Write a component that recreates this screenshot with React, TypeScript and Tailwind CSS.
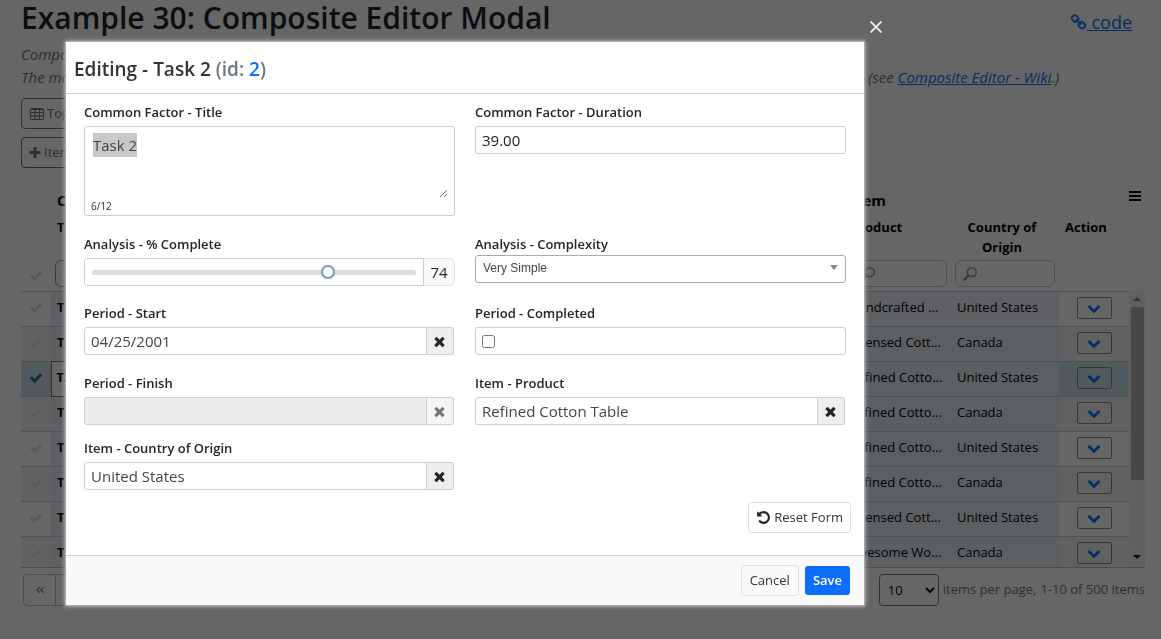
import { useEffect, useRef, useState } from 'react';
import type { ReactNode } from 'react';
import { FaAngleDoubleLeft } from 'react-icons/fa';

const ICONS = {
  check:
    'M1671 566q0 40-28 68l-724 724-136 136q-28 28-68 28t-68-28l-136-136-362-362q-28-28-28-68t28-68l136-136q28-28 68-28t68 28l294 295 656-657q28-28 68-28t68 28l136 136q28 28 28 68z',
  times:
    'M1490 1322q0 40-28 68l-136 136q-28 28-68 28t-68-28l-294-294-294 294q-28 28-68 28t-68-28l-136-136q-28-28-28-68t28-68l294-294-294-294q-28-28-28-68t28-68l136-136q28-28 68-28t68 28l294 294 294-294q28-28 68-28t68 28l136 136q28 28 28 68t-28 68l-294 294 294 294q28 28 28 68z',
  chevronDown:
    'M1683 808l-742 741q-19 19-45 19t-45-19l-742-741q-19-19-19-45.5t19-45.5l166-165q19-19 45-19t45 19l531 531 531-531q19-19 45-19t45 19l166 165q19 19 19 45.5t-19 45.5z',
  plus:
    'M1600 736v192q0 40-28 68t-68 28h-416v416q0 40-28 68t-68 28h-192q-40 0-68-28t-28-68v-416h-416q-40 0-68-28t-28-68v-192q0-40 28-68t68-28h416v-416q0-40 28-68t68-28h192q40 0 68 28t28 68v416h416q40 0 68 28t28 68z',
  undo:
    'M1664 896q0 156-61 298t-164 245-245 164-298 61q-172 0-327-72.5t-264-204.5q-7-10-6.5-22.5t8.5-20.5l137-138q10-9 25-9 16 2 23 12 73 95 179 147t225 52q104 0 198.5-40.5t163.5-109.5 109.5-163.5 40.5-198.5-40.5-198.5-109.5-163.5-163.5-109.5-198.5-40.5q-98 0-188 35.5t-160 101.5l137 138q31 30 14 69-17 40-59 40h-448q-26 0-45-19t-19-45v-448q0-42 40-59 39-17 69 14l130 129q107-101 244.5-156.5t284.5-55.5q156 0 298 61t245 164 164 245 61 298z',
  link:
    'M1520 1216q0-40-28-68l-208-208q-28-28-68-28-42 0-72 32 3 3 19 18.5t21.5 21.5 15 19 13 25.5 3.5 27.5q0 40-28 68t-68 28q-15 0-27.5-3.5t-25.5-13-19-15-21.5-21.5-18.5-19q-33 31-33 73 0 40 28 68l206 207q27 27 68 27 40 0 68-26l147-146q28-28 28-67zm-703-705q0-40-28-68l-206-207q-28-28-68-28-39 0-68 27l-147 146q-28 28-28 67 0 40 28 68l208 208q27 27 68 27 42 0 72-31-3-3-19-18.5t-21.5-21.5-15-19-13-25.5-3.5-27.5q0-40 28-68t68-28q15 0 27.5 3.5t25.5 13 19 15 21.5 21.5 18.5 19q33-31 33-73zm895 705q0 120-85 203l-147 146q-83 83-203 83-121 0-204-85l-206-207q-83-83-83-203 0-123 88-209l-88-88q-86 88-208 88-120 0-204-84l-208-208q-84-84-84-204t85-203l147-146q83-83 203-83 121 0 204 85l206 207q83 83 83 203 0 123-88 209l88 88q86-88 208-88 120 0 204 84l208 208q84 84 84 204z',
};

function Icon({ name, className }: { name: keyof typeof ICONS; className: string }) {
  return (
    <svg viewBox="0 0 1792 1792" fill="currentColor" aria-hidden="true" className={className}>
      <path d={ICONS[name]} />
    </svg>
  );
}

function TableIcon() {
  return (
    <svg viewBox="0 0 14 12" fill="none" stroke="currentColor" aria-hidden="true" className="h-3 w-3.5">
      <rect x="0.5" y="0.5" width="13" height="11" rx="1" />
      <path d="M0 1.5h14M0 4.5h14M0 8h14M5 1v11M9.5 1v11" />
    </svg>
  );
}

function SearchIcon() {
  return (
    <svg viewBox="0 0 14 14" fill="none" stroke="#999" aria-hidden="true" className="size-3.5 shrink-0">
      <circle cx="8.8" cy="5.2" r="4.4" strokeWidth="1.6" />
      <path d="M5.4 8.6L1.4 12.6" strokeWidth="2.6" strokeLinecap="round" />
    </svg>
  );
}

const rows = [
  { product: 'Handcrafted ...', country: 'United States' },
  { product: 'Licensed Cott...', country: 'Canada' },
  { product: 'Refined Cotto...', country: 'United States' },
  { product: 'Refined Cotto...', country: 'Canada' },
  { product: 'Refined Cotto...', country: 'United States' },
  { product: 'Refined Cotto...', country: 'Canada' },
  { product: 'Licensed Cott...', country: 'United States' },
  { product: 'Awesome Wo...', country: 'Canada' },
];

const SELECTED = 2;

function FilterBox({ label }: { label: string }) {
  return (
    <label className="mx-1 flex h-[27px] items-center rounded-md border border-[#c4c4c4] px-[7px]">
      <SearchIcon />
      <input aria-label={label} className="w-full min-w-0 bg-transparent outline-none" />
    </label>
  );
}

function TaskGrid() {
  return (
    <div className="mt-[17px] flex h-[383px] overflow-hidden border-b border-[#bbb] text-black">
      <div className="min-w-0 flex-1">
        <table className="w-full table-fixed border-collapse text-left text-[13px] leading-5">
          <colgroup>
            <col className="w-[30px]" />
            <col />
            <col className="w-[102px]" />
            <col className="w-[108px]" />
            <col className="w-[70px]" />
          </colgroup>
          <thead className="font-bold">
            <tr className="h-8 text-[15px]">
              <td />
              <th className="px-1.5 pb-0.5">Common Factor</th>
              <th className="px-0.5 pb-0.5">Item</th>
              <td />
              <td />
            </tr>
            <tr className="h-10 align-top">
              <td />
              <th className="px-1.5">Title</th>
              <th className="px-0.5">Product</th>
              <th className="pr-3 pl-1.5 text-center">Country of Origin</th>
              <th className="px-1.5">Action</th>
            </tr>
            <tr className="h-[34px]">
              <td>
                <Icon name="check" className="mx-auto mt-1 size-3.5 text-[#dce2e4]" />
              </td>
              <td>
                <input
                  aria-label="Filter by title"
                  className="mx-1 h-[27px] w-40 rounded-md border border-[#5aa5d0] px-2 outline-none"
                />
              </td>
              <td>
                <FilterBox label="Filter by product" />
              </td>
              <td>
                <FilterBox label="Filter by country" />
              </td>
              <td />
            </tr>
          </thead>
          <tbody>
            {rows.map((row, i) => {
              const selected = i === SELECTED;
              return (
                <tr
                  key={i}
                  className={
                    selected
                      ? 'h-[35px] border-t border-[#c8c8c8] bg-[#cfe0ea]'
                      : i % 2
                        ? 'h-[35px] border-t border-[#c8c8c8] bg-[#f3f3f3]'
                        : 'h-[35px] border-t border-[#c8c8c8]'
                  }
                >
                  <td className="pb-0.5">
                    <Icon
                      name="check"
                      className={selected ? 'mx-auto size-3.5 text-[#23739b]' : 'mx-auto size-3.5 text-[#dce2e4]'}
                    />
                  </td>
                  <td
                    className={
                      selected
                        ? 'border border-[#777] bg-white px-[5px] pb-1 font-bold'
                        : 'bg-[#e9eef5] px-1.5 pb-1 font-bold'
                    }
                  >
                    TASK {i}
                  </td>
                  <td
                    className={
                      i === 0
                        ? 'overflow-hidden bg-[#edf0f8] pb-1 whitespace-nowrap'
                        : 'overflow-hidden bg-[#e6eef3] pb-1 whitespace-nowrap'
                    }
                  >
                    {row.product}
                  </td>
                  <td className={i === 0 ? 'bg-[#edf0f8] px-1.5 pb-1' : 'bg-[#e6eef3] px-1.5 pb-1'}>{row.country}</td>
                  <td className="pb-0.5">
                    <button
                      type="button"
                      aria-label="Row actions"
                      className="mx-auto flex h-[22px] w-[35px] items-center justify-center rounded-xs border border-[#888] text-[#0d6efd]"
                    >
                      <Icon name="chevronDown" className="size-3.5" />
                    </button>
                  </td>
                </tr>
              );
            })}
          </tbody>
        </table>
      </div>
      <div className="flex w-4 flex-col">
        <button type="button" aria-label="Grid menu" className="flex h-[106px] flex-col gap-0.5 pt-1.5">
          <span className="h-0.5 w-3 bg-black" />
          <span className="h-0.5 w-3 bg-black" />
          <span className="h-0.5 w-3 bg-black" />
        </button>
        <div className="flex flex-1 flex-col items-center bg-[#f1f1f1]">
          <span className="mt-1.5 border-x-4 border-b-4 border-x-transparent border-b-[#777]" />
          <span className="mt-1.5 h-[173px] w-[13px] bg-[#b5b5b5]" />
          <span className="mt-auto mb-2 border-x-4 border-t-4 border-x-transparent border-t-[#222]" />
        </div>
      </div>
    </div>
  );
}

function Page() {
  return (
    <div className="pr-4 pl-[21px] text-[#212529]">
      <header className="flex h-9 items-start justify-between pr-[13px]">
        <h1 className="text-[30px] leading-9 font-semibold">Example 30: Composite Editor Modal</h1>
        <a href="#code" className="mt-2 flex items-center text-[18px] leading-7 text-[#0d6efd]">
          <Icon name="link" className="size-[17px]" />
          <span className="whitespace-pre underline"> code</span>
        </a>
      </header>
      <div className="mt-[7px] text-[15px] leading-[23px] whitespace-nowrap text-[#6c757d] italic">
        <p>Composite Editor Modal</p>
        <p className="flex">
          <span className="flex-1">The modal</span>
          <span className="w-[277px]">
            (see{' '}
            <a href="#wiki" className="text-[#0d6efd] underline">
              Composite Editor - Wiki
            </a>
            .)
          </span>
        </p>
      </div>
      <div className="mt-[9px] flex flex-col items-start gap-2 text-[13px] text-[#6c757d]">
        <button type="button" className="flex h-[31px] items-center gap-[3px] rounded-sm border border-[#6c757d] px-2">
          <TableIcon />
          Toggle
        </button>
        <button type="button" className="flex h-[31px] items-center gap-0.5 rounded-sm border border-[#6c757d] px-1.5">
          <Icon name="plus" className="size-3.5" />
          Item
        </button>
      </div>
      <TaskGrid />
      <footer className="mt-1.5 flex items-center justify-between pl-0.5 text-[13px] text-[#6c757d]">
        <div className="flex h-8 overflow-hidden rounded-sm border border-[#bbb] text-[#999]">
          <button type="button" aria-label="First page" className="flex w-8 items-center justify-center border-r border-[#bbb]">
            <FaAngleDoubleLeft className="size-2.5" />
          </button>
          <span className="w-7" />
        </div>
        <div className="flex items-center gap-1">
          <select
            aria-label="Items per page"
            defaultValue="10"
            className="h-8 w-[60px] rounded-sm border border-[#777] bg-white pl-1 text-black"
          >
            <option>10</option>
          </select>
          <span>items per page,</span>
          <span>1-10 of 500 items</span>
        </div>
      </footer>
    </div>
  );
}

function Field({ id, label, children }: { id: string; label: string; children: ReactNode }) {
  return (
    <div className="flex flex-col gap-1">
      <label htmlFor={id} className="text-[13px] leading-5 font-semibold text-[#212529]">
        {label}
      </label>
      {children}
    </div>
  );
}

function ClearableField({
  id,
  label,
  value,
  disabled = false,
}: {
  id: string;
  label: string;
  value: string;
  disabled?: boolean;
}) {
  return (
    <Field id={id} label={label}>
      <div className="mr-px flex h-7">
        <input
          id={id}
          defaultValue={value}
          disabled={disabled}
          className="min-w-0 flex-1 rounded-l-[3px] border border-[#ccc] px-1.5 text-[15px] text-[#444] outline-none disabled:bg-[#ebebeb]"
        />
        <button
          type="button"
          aria-label={`Clear ${label}`}
          disabled={disabled}
          className="flex w-[27px] items-center justify-center rounded-r-[3px] border border-l-0 border-[#ccc] bg-[#eee] text-[#212529] disabled:bg-[#f4f4f4] disabled:text-[#777]"
        >
          <Icon name="times" className="mr-0.5 size-[15px]" />
        </button>
      </div>
    </Field>
  );
}

function EditorModal() {
  const titleRef = useRef<HTMLTextAreaElement>(null);
  const [complete, setComplete] = useState(74);

  useEffect(() => {
    titleRef.current?.focus();
    titleRef.current?.select();
  }, []);

  return (
    <div
      role="dialog"
      aria-label="Editing - Task 2"
      className="w-full max-w-[800px] border border-[#aaa] bg-white text-[#333] shadow-[0_0_4px_#ccc]"
    >
      <header className="border-b border-[#ccc] px-2 pt-[11px] pb-2">
        <h2 className="text-[19px] leading-8 font-semibold">
          Editing - Task 2{' '}
          <span className="text-[#6c757d]">
            (id: <span className="text-[#0d6efd]">2</span>)
          </span>
        </h2>
      </header>
      <form className="px-[18px] pt-2" onSubmit={(e) => e.preventDefault()}>
        <div className="grid grid-cols-2 grid-rows-[132px_69px_70px_65px_52px] gap-x-5">
          <Field id="title" label="Common Factor - Title">
            <div className="h-[90px] rounded-[3px] border border-[#ccc] px-1.5 pt-1.5">
              <textarea
                ref={titleRef}
                id="title"
                defaultValue="Task 2"
                className="block h-[65px] w-full px-0.5 text-[15px] leading-6 text-[#444] outline-none selection:bg-[#c8c8c8] selection:text-[#444]"
              />
              <div className="text-[10px] leading-4">6/12</div>
            </div>
          </Field>
          <Field id="duration" label="Common Factor - Duration">
            <input
              id="duration"
              defaultValue="39.00"
              className="h-7 rounded-[3px] border border-[#ccc] px-1.5 text-[15px] text-[#222] outline-none"
            />
          </Field>
          <Field id="percent" label="Analysis - % Complete">
            <div className="flex h-7">
              <div className="flex flex-1 items-center rounded-l-[3px] border border-[#ccc] px-[7px]">
                <input
                  id="percent"
                  type="range"
                  min={0}
                  max={100}
                  value={complete}
                  onChange={(e) => setComplete(Number(e.target.value))}
                  className="h-[5px] w-full appearance-none rounded-full bg-[#ddd] outline-none [&::-webkit-slider-thumb]:size-3.5 [&::-webkit-slider-thumb]:appearance-none [&::-webkit-slider-thumb]:rounded-full [&::-webkit-slider-thumb]:border-2 [&::-webkit-slider-thumb]:border-[#6f9fb8] [&::-webkit-slider-thumb]:bg-white"
                />
              </div>
              <output
                htmlFor="percent"
                className="flex w-[31px] items-center justify-center rounded-r-md border border-l-0 border-[#dee2e6] bg-[#f8f9fa] text-[15px] text-[#212529]"
              >
                {complete}
              </output>
            </div>
          </Field>
          <div className="flex flex-col gap-px">
            <label htmlFor="complexity" className="text-[13px] leading-5 font-semibold text-[#212529]">
              Analysis - Complexity
            </label>
            <div className="grid items-center">
              <select
                id="complexity"
                defaultValue="Very Simple"
                className="col-start-1 row-start-1 h-7 w-full appearance-none rounded-[3px] border border-[#aaa] bg-white px-[7px] pb-0.5 font-['Liberation_Sans',sans-serif] text-[12px] text-[#444] outline-none"
              >
                <option>Very Simple</option>
              </select>
              <span className="pointer-events-none z-10 col-start-1 row-start-1 mr-2 mb-1 justify-self-end border-x-4 border-t-[5px] border-x-transparent border-t-[#888]" />
            </div>
          </div>
          <ClearableField id="start" label="Period - Start" value="04/25/2001" />
          <Field id="completed" label="Period - Completed">
            <div className="flex h-7 items-center rounded-[3px] border border-[#ccc] px-1.5">
              <input id="completed" type="checkbox" className="size-[13px]" />
            </div>
          </Field>
          <ClearableField id="finish" label="Period - Finish" value="" disabled />
          <ClearableField id="product" label="Item - Product" value="Refined Cotton Table" />
          <ClearableField id="country" label="Item - Country of Origin" value="United States" />
        </div>
        <div className="-mr-[5px] flex justify-end pt-3 pb-[22px]">
          <button
            type="reset"
            className="flex h-[31px] items-center gap-[3px] rounded-sm border border-[#ddd] px-[7px] text-[13px] text-[#333]"
          >
            <Icon name="undo" className="size-[15px] text-[#212529]" />
            Reset Form
          </button>
        </div>
      </form>
      <footer className="flex items-center justify-end gap-1.5 border-t border-[#ccc] bg-[#f9f9f9] px-3.5 py-[9px]">
        <button type="button" className="h-[31px] rounded-sm border border-[#ddd] px-2 text-[13px] text-[#333]">
          Cancel
        </button>
        <button type="button" className="h-[29px] rounded-[3px] bg-[#0d6efd] px-2 text-[13px] font-semibold text-white">
          Save
        </button>
      </footer>
    </div>
  );
}

export default function App() {
  return (
    <div className="min-h-screen overflow-hidden bg-white font-['Open_Sans','Noto_Sans',sans-serif]">
      <Page />
      <div className="fixed inset-0 flex items-start bg-black/60 pt-[41px] pl-[65px]">
        <EditorModal />
        <button type="button" aria-label="Close" className="-mt-[22px] ml-[3px] p-0.5 text-[#eee]">
          <svg viewBox="0 0 12 12" fill="none" stroke="currentColor" strokeWidth="1.8" className="size-3">
            <path d="M0.5 0.5l11 11M11.5 0.5l-11 11" />
          </svg>
        </button>
      </div>
    </div>
  );
}
